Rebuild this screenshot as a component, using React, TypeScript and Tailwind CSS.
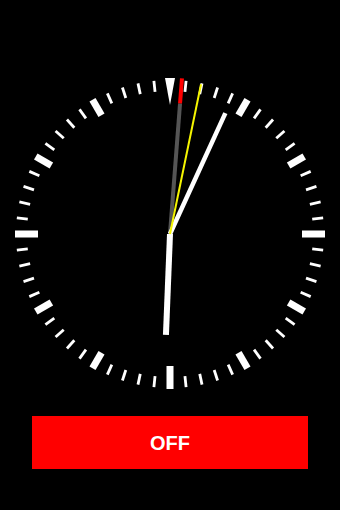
import React from 'react';

const CX = 170;
const CY = 234;

// rotated rect helper: angle in degrees clockwise from 12 o'clock
function Hand({ angle, from, to, width, color }: { angle: number; from: number; to: number; width: number; color: string }) {
  return (
    <rect
      x={CX - width / 2}
      y={CY - to}
      width={width}
      height={to - from}
      fill={color}
      transform={`rotate(${angle} ${CX} ${CY})`}
    />
  );
}

function ClockFace() {
  const ticks = Array.from({ length: 60 }, (_, i) => i);
  return (
    <svg width={340} height={392} viewBox="0 0 340 392" className="block">
      {ticks.map((i) => {
        const angle = i * 6;
        if (i === 0) {
          return (
            <polygon
              key={i}
              points={`${CX - 5},${CY - 156} ${CX + 5},${CY - 156} ${CX},${CY - 129}`}
              fill="#fff"
            />
          );
        }
        if (i % 15 === 0) return <Hand key={i} angle={angle} from={132} to={155} width={7} color="#fff" />;
        if (i % 5 === 0) return <Hand key={i} angle={angle} from={137} to={155} width={7} color="#fff" />;
        return <Hand key={i} angle={angle} from={143} to={154} width={2.8} color="#fff" />;
      })}

      {/* second hand */}
      <Hand angle={4.4} from={0} to={131} width={4} color="#555555" />
      <Hand angle={4.4} from={131} to={156} width={4} color="#ff0000" />

      {/* hour + minute */}
      <Hand angle={182.3} from={0} to={101} width={6} color="#fff" />
      <Hand angle={24.6} from={0} to={133} width={4.5} color="#fff" />

      {/* alarm hand */}
      <Hand angle={11.7} from={0} to={153} width={2} color="#f5f500" />
    </svg>
  );
}

export default function App() {
  return (
    <div className="w-[340px] h-[510px] bg-black flex flex-col items-center overflow-hidden">
      <ClockFace />
      <button
        className="mt-[24px] w-[276px] h-[53px] bg-[#ff0000] text-white text-[20px] font-bold flex items-center justify-center"
        style={{ fontFamily: '"Liberation Sans", Arial, sans-serif' }}
      >
        OFF
      </button>
    </div>
  );
}
